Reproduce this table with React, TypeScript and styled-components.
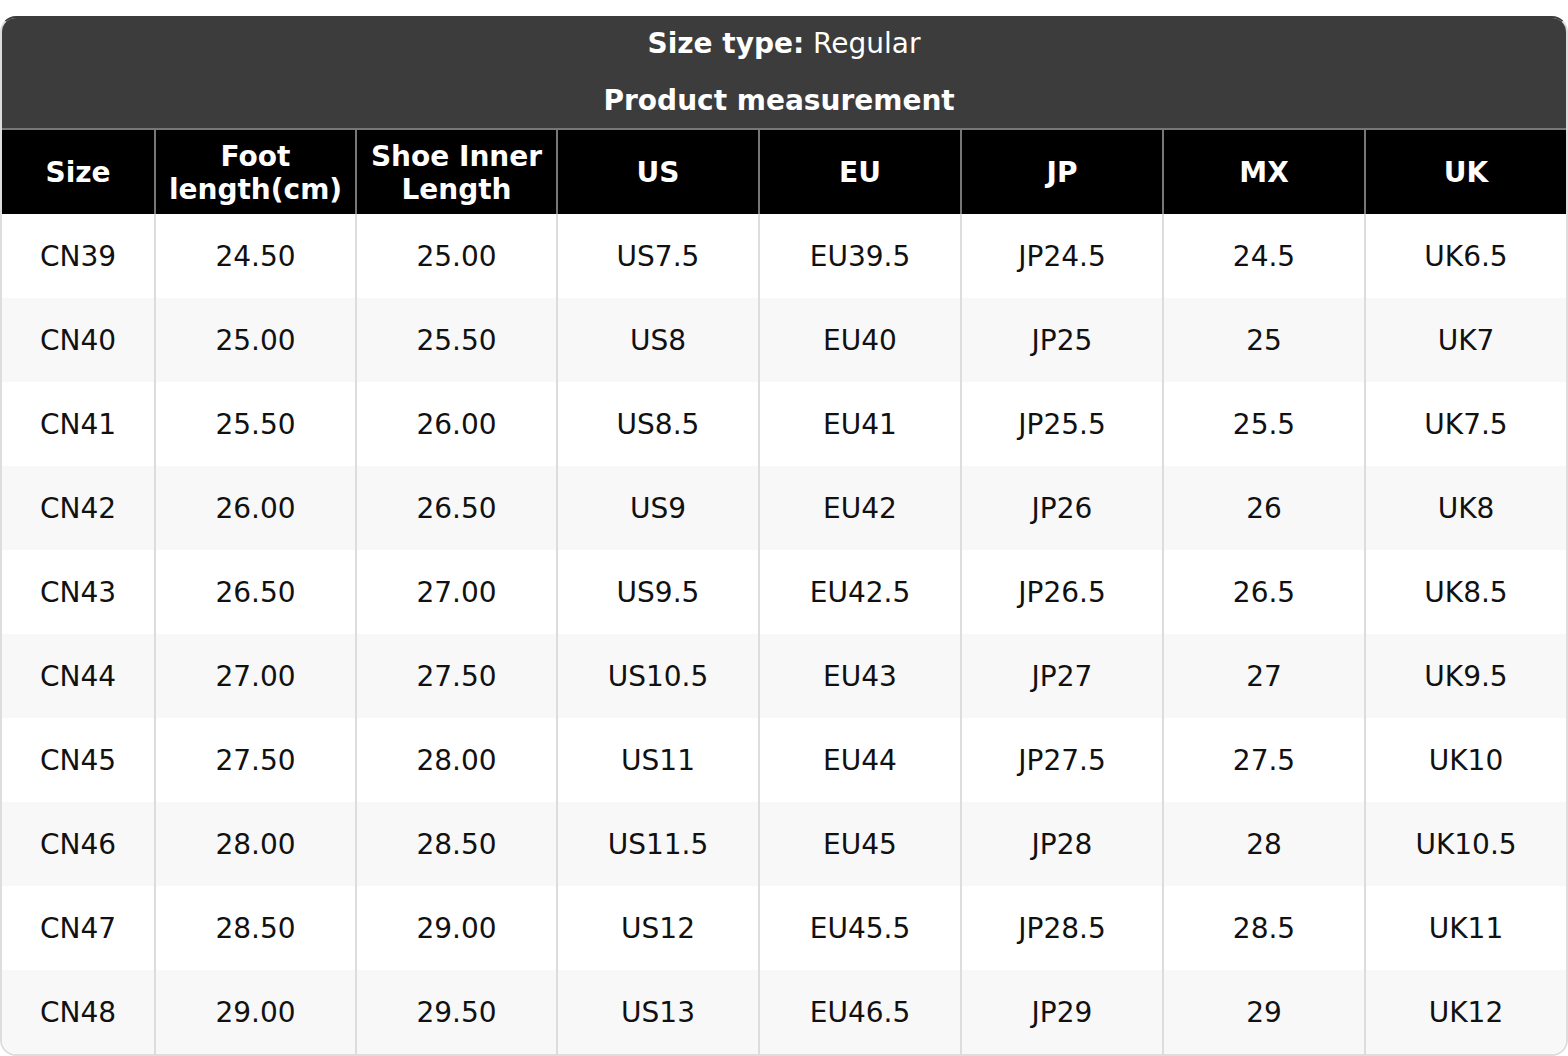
import React from 'react'
import styled, { createGlobalStyle } from 'styled-components'

const GlobalStyle = createGlobalStyle`
  html, body {
    margin: 0;
    padding: 0;
    background: #fff;
  }
  body {
    font-family: 'DejaVu Sans', Verdana, sans-serif;
  }
`

const Wrapper = styled.div`
  padding-top: 16px;
`

const Card = styled.div`
  width: 1568px;
  box-sizing: border-box;
  border: 2px solid #dddddd;
  border-top-color: #3c3c3c;
  border-radius: 16px;
  overflow: hidden;
  background: #fff;
`

const TitleBlock = styled.div`
  background: #3c3c3c;
  color: #fff;
  display: flex;
  flex-direction: column;
  align-items: center;
  gap: 23px;
  padding: 9px 0 10px;
  border-bottom: 2px solid #777777;
`

const TitleLine = styled.div<{ $bold?: boolean }>`
  font-size: 28px;
  line-height: 34px;
  white-space: pre;
  font-weight: ${(props) => (props.$bold ? 700 : 400)};
`

const Strong = styled.span`
  font-weight: 700;
`

const Table = styled.table`
  width: 100%;
  table-layout: fixed;
  border-collapse: separate;
  border-spacing: 0;
`

const HeadCell = styled.th`
  background: #000;
  color: #fff;
  height: 84px;
  padding: 1px 8px 0;
  box-sizing: border-box;
  font-size: 28px;
  line-height: 33px;
  font-weight: 700;
  text-align: center;
  vertical-align: middle;
  border-left: 2px solid #777777;

  &:first-child {
    border-left: none;
  }
`

const Row = styled.tr<{ $alt: boolean }>`
  background: ${(props) => (props.$alt ? '#f8f8f8' : '#ffffff')};
`

const Cell = styled.td`
  height: 84px;
  padding: 2px 0 0;
  box-sizing: border-box;
  font-size: 28px;
  line-height: 34px;
  color: #111;
  text-align: center;
  vertical-align: middle;
  border-left: 2px solid #dddddd;

  &:first-child {
    border-left: none;
  }
`

const headers = ['Size', 'Foot\nlength(cm)', 'Shoe Inner\nLength', 'US', 'EU', 'JP', 'MX', 'UK']
const colWidths = [152, 201, 201, 202, 202, 202, 202, 202]

const rows = [
  ['CN39', '24.50', '25.00', 'US7.5', 'EU39.5', 'JP24.5', '24.5', 'UK6.5'],
  ['CN40', '25.00', '25.50', 'US8', 'EU40', 'JP25', '25', 'UK7'],
  ['CN41', '25.50', '26.00', 'US8.5', 'EU41', 'JP25.5', '25.5', 'UK7.5'],
  ['CN42', '26.00', '26.50', 'US9', 'EU42', 'JP26', '26', 'UK8'],
  ['CN43', '26.50', '27.00', 'US9.5', 'EU42.5', 'JP26.5', '26.5', 'UK8.5'],
  ['CN44', '27.00', '27.50', 'US10.5', 'EU43', 'JP27', '27', 'UK9.5'],
  ['CN45', '27.50', '28.00', 'US11', 'EU44', 'JP27.5', '27.5', 'UK10'],
  ['CN46', '28.00', '28.50', 'US11.5', 'EU45', 'JP28', '28', 'UK10.5'],
  ['CN47', '28.50', '29.00', 'US12', 'EU45.5', 'JP28.5', '28.5', 'UK11'],
  ['CN48', '29.00', '29.50', 'US13', 'EU46.5', 'JP29', '29', 'UK12'],
]

export default function App() {
  return (
    <Wrapper>
      <GlobalStyle />
      <Card>
        <TitleBlock>
          <TitleLine>
            <Strong>Size type:</Strong> Regular
          </TitleLine>
          <TitleLine $bold>{'Product measurement '}</TitleLine>
        </TitleBlock>
        <Table>
          <colgroup>
            {colWidths.map((w, i) => (
              <col key={i} style={{ width: w }} />
            ))}
          </colgroup>
          <thead>
            <tr>
              {headers.map((h) => (
                <HeadCell key={h}>
                  {h.split('\n').map((part, i) => (
                    <React.Fragment key={i}>
                      {i > 0 && <br />}
                      {part}
                    </React.Fragment>
                  ))}
                </HeadCell>
              ))}
            </tr>
          </thead>
          <tbody>
            {rows.map((r, i) => (
              <Row key={r[0]} $alt={i % 2 === 1}>
                {r.map((v, j) => (
                  <Cell key={j}>{v}</Cell>
                ))}
              </Row>
            ))}
          </tbody>
        </Table>
      </Card>
    </Wrapper>
  )
}
